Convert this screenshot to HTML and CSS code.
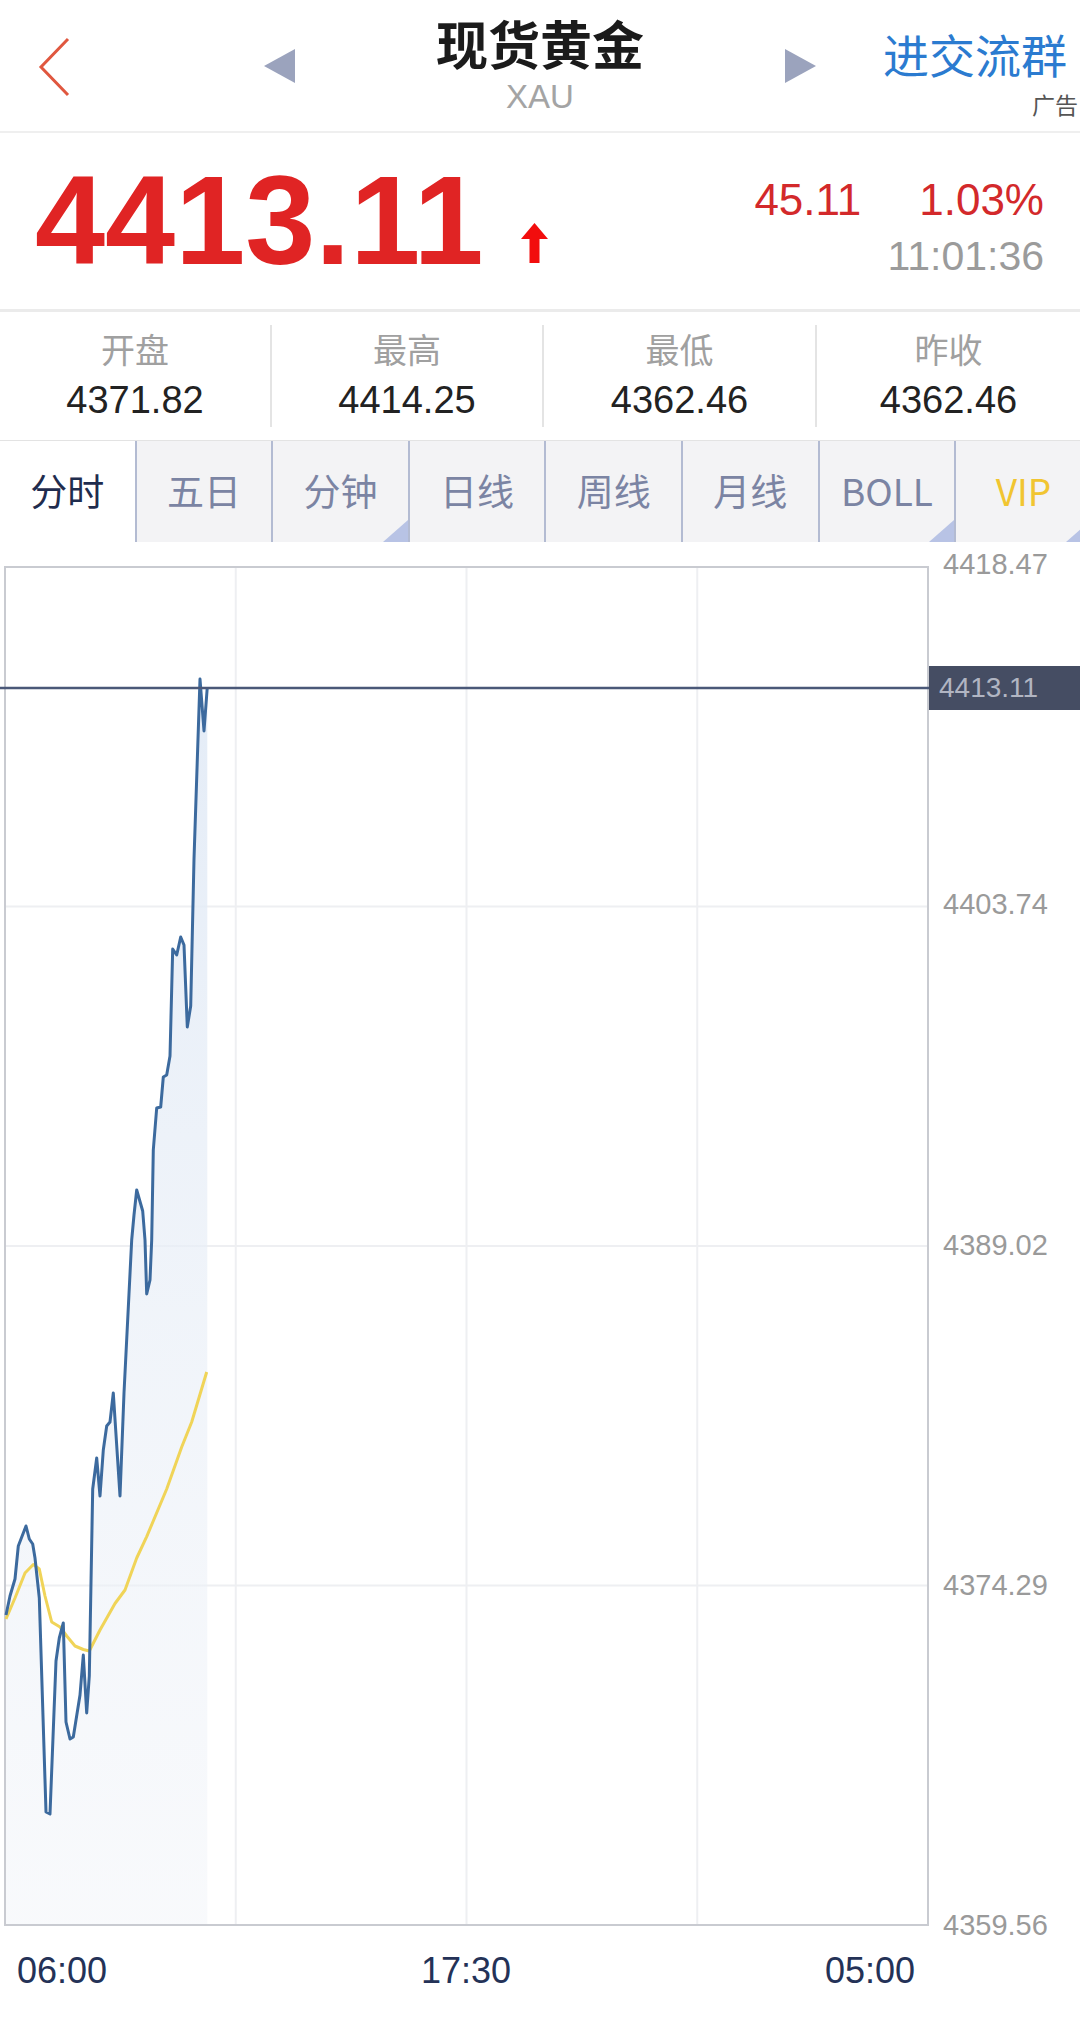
FILE: index.html
```html
<!DOCTYPE html>
<html lang="zh-CN">
<head>
<meta charset="utf-8">
<title>现货黄金 XAU</title>
<link rel="stylesheet" href="styles.css">
</head>
<body>
<div class="page">
  <header class="topbar">
    <div class="tb-left">
      <svg class="back" width="32" height="60" viewBox="0 0 32 60"><polyline points="30,2 3,30 30,58" fill="none" stroke="#e0573f" stroke-width="3"/></svg>
    </div>
    <div class="tb-center">
      <svg class="tri" width="31" height="34" viewBox="0 0 31 34"><polygon points="31,0 31,34 0,17" fill="#9ba3bd"/></svg>
      <div class="title-block">
        <div class="title">现货黄金</div>
        <div class="code">XAU</div>
      </div>
      <svg class="tri" width="31" height="34" viewBox="0 0 31 34"><polygon points="0,0 0,34 31,17" fill="#9ba3bd"/></svg>
    </div>
    <div class="tb-right">
      <div class="group">进交流群</div>
      <div class="ad">广告</div>
    </div>
  </header>

  <section class="quote">
    <div class="price-wrap">
      <span class="price">4413.11</span>
      <svg class="up-arrow" width="27" height="40" viewBox="0 0 27 40"><polygon points="13.5,0 27,16 18.5,16 18.5,40 8.5,40 8.5,16 0,16" fill="#f20d0d"/></svg>
    </div>
    <div class="change">
      <div class="change-row"><span>45.11</span><span>1.03%</span></div>
      <div class="time">11:01:36</div>
    </div>
  </section>

  <section class="stats">
    <div class="stat"><div class="stat-label">开盘</div><div class="stat-value">4371.82</div></div>
    <div class="stat"><div class="stat-label">最高</div><div class="stat-value">4414.25</div></div>
    <div class="stat"><div class="stat-label">最低</div><div class="stat-value">4362.46</div></div>
    <div class="stat"><div class="stat-label">昨收</div><div class="stat-value">4362.46</div></div>
  </section>

  <nav class="tabs">
    <div class="tab active">分时</div>
    <div class="tab">五日</div>
    <div class="tab corner">分钟</div>
    <div class="tab">日线</div>
    <div class="tab">周线</div>
    <div class="tab">月线</div>
    <div class="tab corner latin">BOLL</div>
    <div class="tab corner latin vip">VIP</div>
  </nav>

  <section class="chart">
    <svg class="plot" width="930" height="1398" viewBox="0 542 930 1398">
      <defs>
        <linearGradient id="area" x1="0" y1="677" x2="0" y2="1925" gradientUnits="userSpaceOnUse">
          <stop offset="0" stop-color="#e1eaf6" stop-opacity="0.9"/>
          <stop offset="1" stop-color="#f0f3f8" stop-opacity="0.45"/>
        </linearGradient>
      </defs>
      <g stroke="#eeeff2" stroke-width="2">
        <line x1="5" y1="906.5" x2="928" y2="906.5"/>
        <line x1="5" y1="1246" x2="928" y2="1246"/>
        <line x1="5" y1="1585.5" x2="928" y2="1585.5"/>
        <line x1="235.75" y1="567" x2="235.75" y2="1925"/>
        <line x1="466.5" y1="567" x2="466.5" y2="1925"/>
        <line x1="697.25" y1="567" x2="697.25" y2="1925"/>
      </g>
      <path fill="url(#area)" d="M6,1615 L10,1596 L15,1579 L18.3,1546 L26,1526 L29.3,1539 L32.7,1544 L35,1558 L39.3,1598 L46,1812 L50,1814 L56,1661 L59.3,1638 L63.3,1623 L66,1722 L70,1739 L73.3,1737 L80,1695 L83.3,1655 L86.7,1713 L89.3,1676 L92.7,1489 L96.7,1458 L100,1496 L103.3,1450 L106.7,1426 L110,1422 L113.3,1393 L120,1496 L124,1393 L131.7,1240 L134,1215 L136.7,1190 L142.7,1211 L145,1240 L146.7,1294 L150,1280 L151.7,1240 L153.3,1150 L156.7,1108 L160.7,1107 L163.3,1077 L166.7,1075 L170,1056 L172.7,949 L176.7,955 L180.7,937 L184,945 L187.3,1027 L190.7,1006 L194,859 L200,679 L204,731 L207.3,687 L207.3,1925 L6,1925 Z"/>
      <rect x="5" y="567" width="923" height="1358" fill="none" stroke="#c9cbd1" stroke-width="2"/>
      <polyline fill="none" stroke="#f0d458" stroke-width="3" stroke-linejoin="round" points="6,1619 15,1598 25,1573 33.3,1564.5 39.3,1569 45,1596 51.7,1622 60,1627 66.7,1636 75,1646 83.3,1649.5 89.3,1651 100,1630 115,1603.5 125,1590 136.7,1558 146.7,1536.6 166.7,1489 181.7,1447 191.7,1422 206.7,1372"/>
      <polyline fill="none" stroke="#3c6a9e" stroke-width="3" stroke-linejoin="round" points="6,1615 10,1596 15,1579 18.3,1546 26,1526 29.3,1539 32.7,1544 35,1558 39.3,1598 46,1812 50,1814 56,1661 59.3,1638 63.3,1623 66,1722 70,1739 73.3,1737 80,1695 83.3,1655 86.7,1713 89.3,1676 92.7,1489 96.7,1458 100,1496 103.3,1450 106.7,1426 110,1422 113.3,1393 120,1496 124,1393 131.7,1240 134,1215 136.7,1190 142.7,1211 145,1240 146.7,1294 150,1280 151.7,1240 153.3,1150 156.7,1108 160.7,1107 163.3,1077 166.7,1075 170,1056 172.7,949 176.7,955 180.7,937 184,945 187.3,1027 190.7,1006 194,859 200,679 204,731 207.3,687"/>
      <line x1="0" y1="688" x2="930" y2="688" stroke="#4a5878" stroke-width="2.5"/>
    </svg>
    <div class="yaxis">
      <span>4418.47</span>
      <span>4403.74</span>
      <span>4389.02</span>
      <span>4374.29</span>
      <span>4359.56</span>
    </div>
    <div class="last-badge">4413.11</div>
  </section>

  <div class="xaxis"><span>06:00</span><span>17:30</span><span>05:00</span></div>
</div>
</body>
</html>
```

FILE: styles.css
```css
* { box-sizing: border-box; }
html, body { margin: 0; padding: 0; background: #ffffff; }
body {
  font-family: "Noto Sans CJK SC", "Noto Sans", sans-serif;
  color: #1a1a1a;
}
.page { width: 1080px; height: 2022px; overflow: hidden; background: #fff; }

/* top bar */
.topbar {
  display: grid;
  grid-template-columns: 1fr auto 1fr;
  height: 133px;
  border-bottom: 2px solid #efefef;
}
.tb-left { display: flex; align-items: flex-start; }
.back { display: block; margin-left: 38px; margin-top: 37px; }
.tb-center { display: flex; align-items: flex-start; gap: 141px; }
.tri { display: block; margin-top: 49px; }
.title-block { display: flex; flex-direction: column; align-items: center; padding-top: 13px; }
.title { font-size: 52px; font-weight: 700; line-height: 60px; color: #1b1b1b; white-space: nowrap; }
.code {
  font-family: "Liberation Sans", Arial, sans-serif;
  font-size: 33px;
  line-height: 40px;
  margin-top: 4px;
  color: #a4a4a4;
}
.tb-right { display: flex; flex-direction: column; align-items: flex-end; padding-right: 13px; padding-top: 25px; }
.group { font-size: 46px; line-height: 56px; color: #2b7bd0; white-space: nowrap; }
.ad { font-size: 23px; line-height: 26px; color: #555; margin-top: 10px; margin-right: -11px; }

/* quote */
.quote {
  display: flex;
  align-items: flex-start;
  height: 179px;
  border-bottom: 3px solid #ebebeb;
}
.price-wrap { display: flex; align-items: flex-start; }
.price {
  font-family: "Liberation Sans", Arial, sans-serif;
  font-weight: 700;
  font-size: 126px;
  line-height: 126px;
  color: #e02424;
  margin-left: 35px;
  margin-top: 25px;
}
.up-arrow { display: block; margin-left: 37px; margin-top: 90px; }
.change {
  margin-left: auto;
  margin-right: 36px;
  margin-top: 42px;
  text-align: right;
  font-family: "Liberation Sans", Arial, sans-serif;
}
.change-row { display: flex; justify-content: flex-end; gap: 58px; font-size: 44px; line-height: 50px; color: #d3292b; }
.time { font-size: 41px; line-height: 46px; margin-top: 8px; color: #9b9b9b; }

/* stats */
.stats {
  display: grid;
  grid-template-columns: 272px 272px 273px 1fr;
  padding: 13px 0;
  border-bottom: 1px solid #e3e3e3;
}
.stat { height: 102px; padding-top: 4px; text-align: center; border-right: 2px solid #e4e4e4; }
.stat:last-child { border-right: none; }
.stat-label { font-size: 34px; line-height: 40px; color: #a0a0a0; }
.stat-value {
  font-family: "Liberation Sans", Arial, sans-serif;
  font-size: 38px;
  line-height: 44px;
  margin-top: 9px;
  color: #222;
}

/* tabs */
.tabs { display: flex; height: 101px; overflow: hidden; background: #f3f3f5; }
.tab {
  flex: 0 0 136.6px;
  position: relative;
  display: flex;
  align-items: center;
  justify-content: center;
  padding-bottom: 4px;
  border-right: 2px solid #b3bbd2;
  font-size: 37px;
  color: #7b84a3;
  white-space: nowrap;
}
.tab.active { background: #fff; color: #1f2c4e; }
.tab.vip { color: #f1c531; }
.tab.corner::after {
  content: "";
  position: absolute;
  right: 0;
  bottom: 0;
  width: 0;
  height: 0;
  border-left: 25px solid transparent;
  border-bottom: 22px solid #b8c3e5;
}

/* chart */
.chart { display: flex; height: 1398px; position: relative; }
.plot { display: block; flex: 0 0 930px; }
.yaxis {
  display: flex;
  flex-direction: column;
  justify-content: space-between;
  height: 1398px;
  padding: 7px 0 0 13px;
  font-family: "Liberation Sans", Arial, sans-serif;
  font-size: 29px;
  line-height: 30px;
  color: #9a9a9a;
}
.last-badge {
  position: absolute;
  left: 929px;
  top: 124px;
  width: 151px;
  height: 44px;
  padding-left: 10px;
  background: #454d63;
  color: #b1b5c2;
  font-family: "Liberation Sans", Arial, sans-serif;
  font-size: 28px;
  line-height: 44px;
}
.xaxis {
  display: flex;
  justify-content: space-between;
  width: 930px;
  padding: 0 15px 0 17px;
  margin-top: 11px;
  font-family: "Liberation Sans", Arial, sans-serif;
  font-size: 36px;
  line-height: 40px;
  color: #243257;
}
```
